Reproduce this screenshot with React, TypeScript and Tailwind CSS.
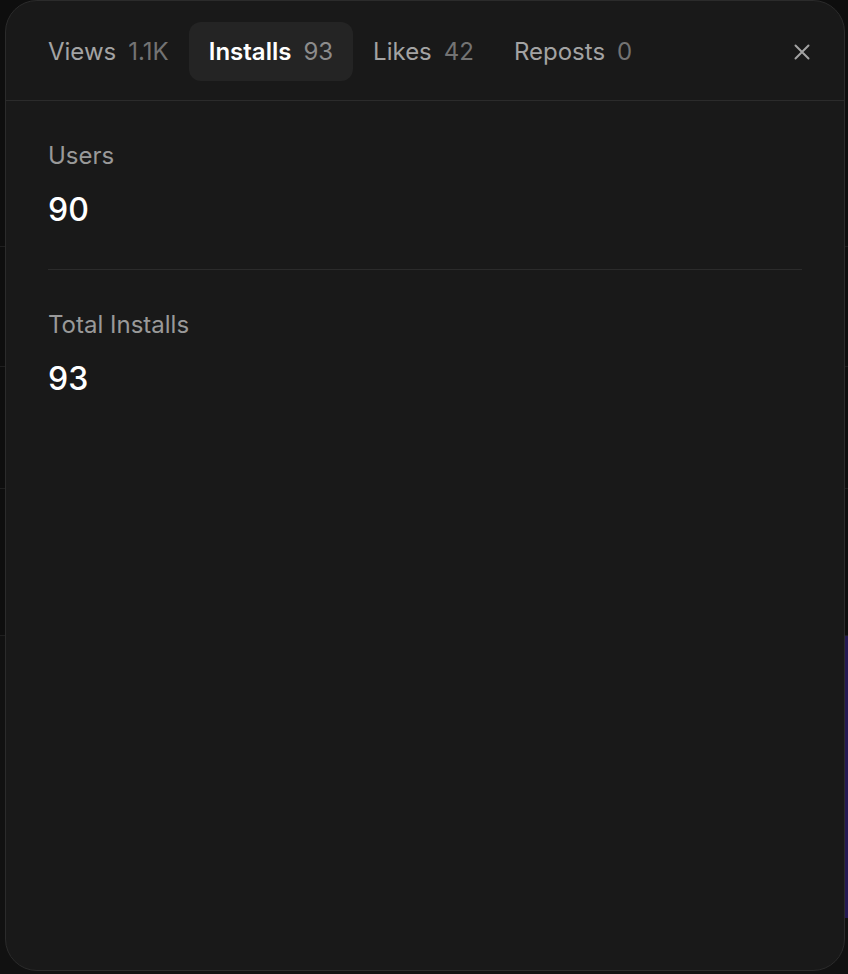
import React, { useState } from "react";

type TabId = "views" | "installs" | "likes" | "reposts";

const TABS: { id: TabId; label: string; count: string }[] = [
  { id: "views", label: "Views", count: "1.1K" },
  { id: "installs", label: "Installs", count: "93" },
  { id: "likes", label: "Likes", count: "42" },
  { id: "reposts", label: "Reposts", count: "0" },
];

const STATS = [
  { label: "Users", value: "90" },
  { label: "Total Installs", value: "93" },
];

export default function App() {
  const [active, setActive] = useState<TabId>("installs");

  return (
    <div
      className="relative w-[848px] h-[974px] overflow-hidden bg-[#0e0e0e]"
      style={{ fontFamily: "Inter, 'Noto Sans', sans-serif" }}
    >
      {/* Page behind the dialog */}
      <div className="flex flex-col h-full">
        <div className="h-[247px] border-b border-[#1f1f1f]" />
        <div className="h-[120px] border-b border-[#1f1f1f]" />
        <div className="h-[122px] border-b border-[#1f1f1f]" />
        <div className="h-[147px] border-b border-[#1f1f1f]" />
        <div className="flex-1 flex justify-end bg-[#111111]">
          <div className="w-[6px] h-[282px] bg-[#241a52]" />
        </div>
      </div>

      {/* Dialog */}
      <div className="absolute left-[5px] top-0 w-[840px] h-[971px] rounded-[32px] border border-[#2b2b2b] bg-[#191919] flex flex-col">
        {/* Header */}
        <div className="flex items-center justify-between pl-[22px] pr-[26px] pt-[21px] pb-[19px] border-b border-[#2b2b2b]">
          <div className="flex items-center">
            {TABS.map((tab) => {
              const on = active === tab.id;
              return (
                <button
                  key={tab.id}
                  onClick={() => setActive(tab.id)}
                  className={`flex items-center gap-3 h-[59px] px-5 rounded-xl text-[24px] leading-8 ${on ? "bg-[#242424]" : ""}`}
                >
                  <span className={on ? "text-white font-semibold" : "text-[#a3a3a3]"}>{tab.label}</span>
                  <span className={on ? "text-[#8c8c8c]" : "text-[#737373]"}>{tab.count}</span>
                </button>
              );
            })}
          </div>
          <button className="w-8 h-8 flex items-center justify-center text-[#a3a3a3]">
            <svg width="16" height="16" viewBox="0 0 16 16" fill="none">
              <path d="M1.5 1.5L14.5 14.5M14.5 1.5L1.5 14.5" stroke="currentColor" strokeWidth="2" strokeLinecap="round" />
            </svg>
          </button>
        </div>

        {/* Stats */}
        <div className="px-[42px]">
          {STATS.map((s, i) => (
            <div
              key={s.label}
              className={`pt-[39px] pb-[39px] ${i < STATS.length - 1 ? "border-b border-[#2b2b2b]" : ""}`}
            >
              <div className="text-[24px] leading-8 text-[#999999]">{s.label}</div>
              <div className="mt-[18px] text-[32px] leading-10 text-white font-medium">{s.value}</div>
            </div>
          ))}
        </div>
      </div>
    </div>
  );
}
